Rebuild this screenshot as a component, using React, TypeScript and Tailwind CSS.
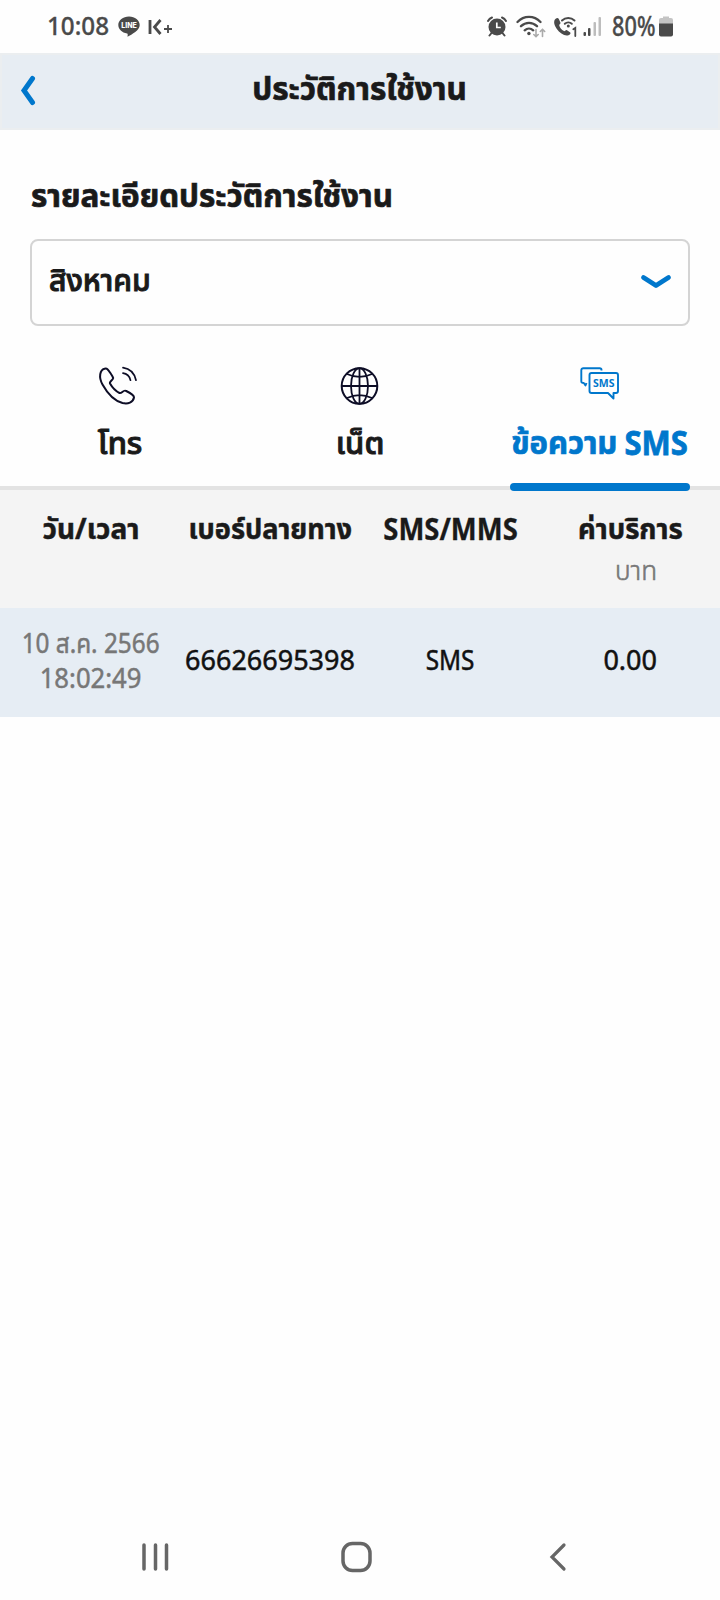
import type { ReactNode } from "react";

function Label({ className = "", children }: { className?: string; children: ReactNode }) {
  return <span className={`inline-block whitespace-nowrap ${className}`}>{children}</span>;
}

function StatusBar() {
  return (
    <div className="flex h-[53px] items-center justify-between pl-[47px] pr-[47px] text-[#4a4a4a]">
      <div className="flex items-center">
        <div className="w-[62px] pb-[3px]">
          <Label className="origin-left scale-x-[0.97] text-[25px] leading-[30px] font-medium [-webkit-text-stroke:0.3px]">10:08</Label>
        </div>
        <svg className="ml-[9px]" width="22" height="22" viewBox="0 0 22 22">
          <path d="M11 0.5C5 0.5 0.3 4.3 0.3 9c0 4.200 3.700 7.700 8.800 8.400.8.200.7.800.4 3.300 4.500-2.300 12.200-6.500 12.200-11.700C21.700 4.300 17 .5 11 .5Z" fill="currentColor" />
          <text x="11" y="11.800" textAnchor="middle" fontSize="7" fontWeight="800" fill="white" fontFamily="Inter">LINE</text>
        </svg>
        <svg className="ml-2" width="25" height="18" viewBox="0 0 25 18" fill="none" stroke="currentColor">
          <path d="M2 2v14M12.500 2 6.500 9l6 7" strokeWidth="2.800" />
          <path d="M16 11h8M20 7v8" strokeWidth="1.800" />
        </svg>
      </div>
      <div className="flex items-center">
        <svg className="mr-px" width="20" height="21" viewBox="0 0 20 21">
          <circle cx="10" cy="11" r="8.500" fill="currentColor" />
          <path d="M1 5a8 8 0 0 1 4-3.500M19 5a8 8 0 0 0-4-3.500M4.500 17 2.500 19.500M15.500 17l2 2.500" stroke="currentColor" strokeWidth="2" fill="none" strokeLinecap="round" />
          <path d="M9.800 6.500V11.500h4" stroke="white" strokeWidth="1.700" fill="none" />
        </svg>
        <svg className="ml-[8px]" width="30" height="24" viewBox="0 0 30 24" fill="none" strokeLinecap="round">
          <path d="M1.500 7C8 .200 18 .200 24.500 7M5 11.200c4.700-4.500 11.300-4.500 16 0M8.700 15.300c2.500-2.300 6-2.300 8.500 0" stroke="currentColor" strokeWidth="2.300" />
          <circle cx="12.900" cy="18.500" r="1.700" fill="currentColor" />
          <path d="M20 14.500v7M17.800 19.500l2.200 2.200 2.200-2.200M26.500 21.500v-7M24.300 16.500l2.200-2.200 2.200 2.200" stroke="#aaaaaa" strokeWidth="1.600" />
        </svg>
        <svg className="ml-[7px]" width="25" height="21" viewBox="0 0 25 21" fill="none" strokeLinecap="round">
          <path d="M3 2.500C0.500 4 .500 8 3.500 12.500c3.500 5 8 7.700 12 6.700 1.500-.5 2.500-1.700 1.800-2.700l-3.300-2.300c-1-.6-2 1.300-3 .9C8.500 14 6.500 11 6.200 9.300c-.2-1 1.700-1.500 1.300-2.600L5.800 2.900C5.200 1.800 4 1.800 3 2.500Z" fill="currentColor" />
          <path d="M9 4.500c3.500-3.300 9-3.300 12.500 0M11.800 7.800c2-1.800 5-1.800 7 0" stroke="currentColor" strokeWidth="2" />
          <circle cx="15.300" cy="10" r="1.500" fill="currentColor" />
          <path d="M20.300 13.300 22.300 12v8" stroke="currentColor" strokeWidth="1.800" />
        </svg>
        <svg className="ml-[5px]" width="19" height="20" viewBox="0 0 19 20">
          <rect x="0.500" y="15" width="2.500" height="4" rx="1" fill="currentColor" />
          <rect x="5" y="11" width="2.500" height="8" rx="1" fill="currentColor" />
          <rect x="10.500" y="5" width="2.500" height="14" rx="1" fill="#bdbdbd" />
          <rect x="15.500" y="0" width="2.500" height="19" rx="1" fill="#bdbdbd" />
        </svg>
        <div className="ml-[10px] w-[44px] pb-[3px]">
          <Label className="origin-left scale-x-[0.87] scale-y-[1.06] text-[25px] leading-[30px] font-medium [-webkit-text-stroke:0.3px]">80%</Label>
        </div>
        <svg className="ml-[3px]" width="14" height="21" viewBox="0 0 14 21">
          <path d="M4 2V.500h6V2h2a2 2 0 0 1 2 2v4H0V4a2 2 0 0 1 2-2Z" fill="#c4c4c4" />
          <path d="M0 7.500h14V18.500a2 2 0 0 1-2 2H2a2 2 0 0 1-2-2Z" fill="currentColor" />
        </svg>
      </div>
    </div>
  );
}

export default function App() {
  return (
    <div className="flex h-[1600px] w-[720px] flex-col bg-[#fefefe] font-['Noto_Sans','Noto_Sans_Thai',sans-serif] text-[#1a1a1a]">
      <StatusBar />
      <header className="flex h-[77px] items-center border-2 border-[#ebeef0] bg-[#e7edf3] pb-[3px]">
        <svg className="ml-[18px]" width="17" height="32" viewBox="0 0 17 32" fill="none">
          <path d="M12.500 4.500 4 16.500l8.500 12" stroke="#0077cc" strokeWidth="5" strokeLinecap="round" />
        </svg>
        <div className="mr-[36px] flex-1 pb-[4px] text-center text-[31.500px] font-bold [-webkit-text-stroke:0.7px]">
          <Label>ประวัติการใช้งาน</Label>
        </div>
      </header>

      <section className="px-[30px] pt-[40px]">
        <h2 className="h-[69px] pl-px text-[31.400px] leading-[50px] font-bold [-webkit-text-stroke:0.7px]">
          <Label>รายละเอียดประวัติการใช้งาน</Label>
        </h2>
        <div className="flex h-[87px] items-center justify-between rounded-lg border-2 border-[#d4d4d4] pl-[17px] pr-[16px]">
          <Label className="pb-[7px] text-[30px] font-medium [-webkit-text-stroke:1px]">สิงหาคม</Label>
          <svg className="mb-px" width="32" height="18" viewBox="0 0 32 18" fill="none">
            <path d="M3.500 4.500 16 12.500 28.500 4.500" stroke="#0077cc" strokeWidth="4.800" strokeLinecap="round" strokeLinejoin="round" />
          </svg>
        </div>
      </section>

      <nav className="flex h-[164px] justify-between border-b-4 border-[#e3e3e3] px-[30px] pt-[39px] text-[31px] leading-[44px]">
        <div className="flex w-[180px] flex-col items-center font-medium">
          <svg className="mr-[5px]" width="40" height="42" viewBox="0 0 40 42" fill="none" stroke="#0d0d26" strokeLinecap="round" strokeLinejoin="round" strokeWidth="2">
            <path d="M6.500 3.700C2 5 .300 12 4.500 19.500c5 9 12.500 16.500 20 18.500 5.500 1.300 10.500-.5 11.500-5.500.3-2.800-5.700-5.500-8.200-6.700-2.600-1.200-4.100 3-6.300 2.200C18.500 26.500 14 22 12 18.500c-1-2 3-3.500 3.200-5.500C14.500 11 10.800 5.500 9.200 4 8.500 3.300 7.500 3.300 6.500 3.700Z" />
            <path d="M25 2.700c7 1 11.500 6 13 12.500M25 8.200c4 .5 6.500 3.200 7.500 7" strokeWidth="1.700" />
          </svg>
          <Label className="mt-[13px] [-webkit-text-stroke:1px]">โทร</Label>
        </div>
        <div className="flex w-[180px] flex-col items-center font-medium">
          <svg width="40" height="42" viewBox="0 0 40 42" fill="none" stroke="#0d0d26" strokeWidth="2">
            <circle cx="19.500" cy="21" r="17.800" />
            <ellipse cx="19.500" cy="21" rx="8.500" ry="17.800" strokeWidth="1.800" />
            <path d="M19.500 3v36M2 21h35M7 9c8 3.800 17 3.800 25 0M7 33c8-3.800 17-3.800 25 0" strokeWidth="1.800" />
          </svg>
          <Label className="mt-[13px] [-webkit-text-stroke:1px]">เน็ต</Label>
        </div>
        <div className="relative flex w-[180px] flex-col items-center font-bold text-[#0077cc]">
          <svg width="40" height="42" viewBox="0 0 40 42" fill="none" stroke="currentColor" strokeWidth="1.900" strokeLinejoin="round">
            <path d="M21.500 5.500V5a1.800 1.800 0 0 0-1.800-1.800H3.300a2 2 0 0 0-2 2v11c0 1.300 1 1.800 2.500 1.800L5.500 20.500l1-2.500" />
            <path d="M11.500 8h24.500a2 2 0 0 1 2 2v16a2 2 0 0 1-2 2H33.500V33.500l-5.500-5.500H11.500a2 2 0 0 1-2-2v-16a2 2 0 0 1 2-2Z" />
            <text x="23.800" y="21.800" textAnchor="middle" stroke="none" fill="currentColor" fontSize="10.500" fontWeight="700" fontFamily="Noto Sans">SMS</text>
          </svg>
          <div className="mt-[13px] mr-px flex [-webkit-text-stroke:0.7px]">
            <Label>ข้อความ</Label>
            <Label className="ml-[7px] scale-y-[1.12]">SMS</Label>
          </div>
          <div className="absolute -bottom-[5px] left-0 h-2 w-[180px] rounded-full bg-[#0077cc]" />
        </div>
      </nav>

      <div className="grid h-[118px] grid-cols-[182px_176px_184px_178px] bg-[#f4f4f4] pt-[18px] text-center text-[28px] leading-[40px] font-bold">
        <div><Label className="[-webkit-text-stroke:0.5px]">วัน/เวลา</Label></div>
        <div><Label className="scale-x-[0.97] [-webkit-text-stroke:0.5px]">เบอร์ปลายทาง</Label></div>
        <div className="pl-[2px]"><Label className="scale-x-[0.98] scale-y-[1.08] [-webkit-text-stroke:0.3px]">SMS/MMS</Label></div>
        <div className="pr-px">
          <Label className="scale-x-[0.98] [-webkit-text-stroke:0.5px]">ค่าบริการ</Label>
          <div className="pt-[2px] pr-[62px] text-right text-[26px] font-light text-[#777] [-webkit-text-stroke:0.6px]"><Label>บาท</Label></div>
        </div>
      </div>

      <div className="grid h-[109px] grid-cols-[182px_176px_184px_178px] items-center bg-[#e6edf4] pb-[6px] text-center text-[27px] leading-[35px] text-[#111] [-webkit-text-stroke:0.5px]">
        <div className="flex flex-col items-center pr-px text-[#777]">
          <Label className="scale-x-[0.9]">10 ส.ค. 2566</Label>
          <Label className="scale-x-[0.95]">18:02:49</Label>
        </div>
        <div><Label>66626695398</Label></div>
        <div><Label className="scale-x-[0.9]">SMS</Label></div>
        <div className="pr-[63px] text-right"><Label>0.00</Label></div>
      </div>

      <footer className="mt-auto flex h-[86px] items-center px-[140px]">
        <svg width="30" height="30" viewBox="0 0 30 30" fill="none" stroke="#666" strokeWidth="3.500" strokeLinecap="round">
          <path d="M4 3v24M15.500 3v24M26.500 3v24" />
        </svg>
        <svg className="ml-[170px]" width="32" height="32" viewBox="0 0 32 32" fill="none" stroke="#666" strokeWidth="3.500">
          <rect x="3" y="2.500" width="27" height="27" rx="9.500" />
        </svg>
        <svg className="ml-[175px]" width="22" height="30" viewBox="0 0 22 30" fill="none" stroke="#666" strokeWidth="3.200" strokeLinecap="round">
          <path d="M17 3 5 15l12 12" />
        </svg>
      </footer>
    </div>
  );
}
